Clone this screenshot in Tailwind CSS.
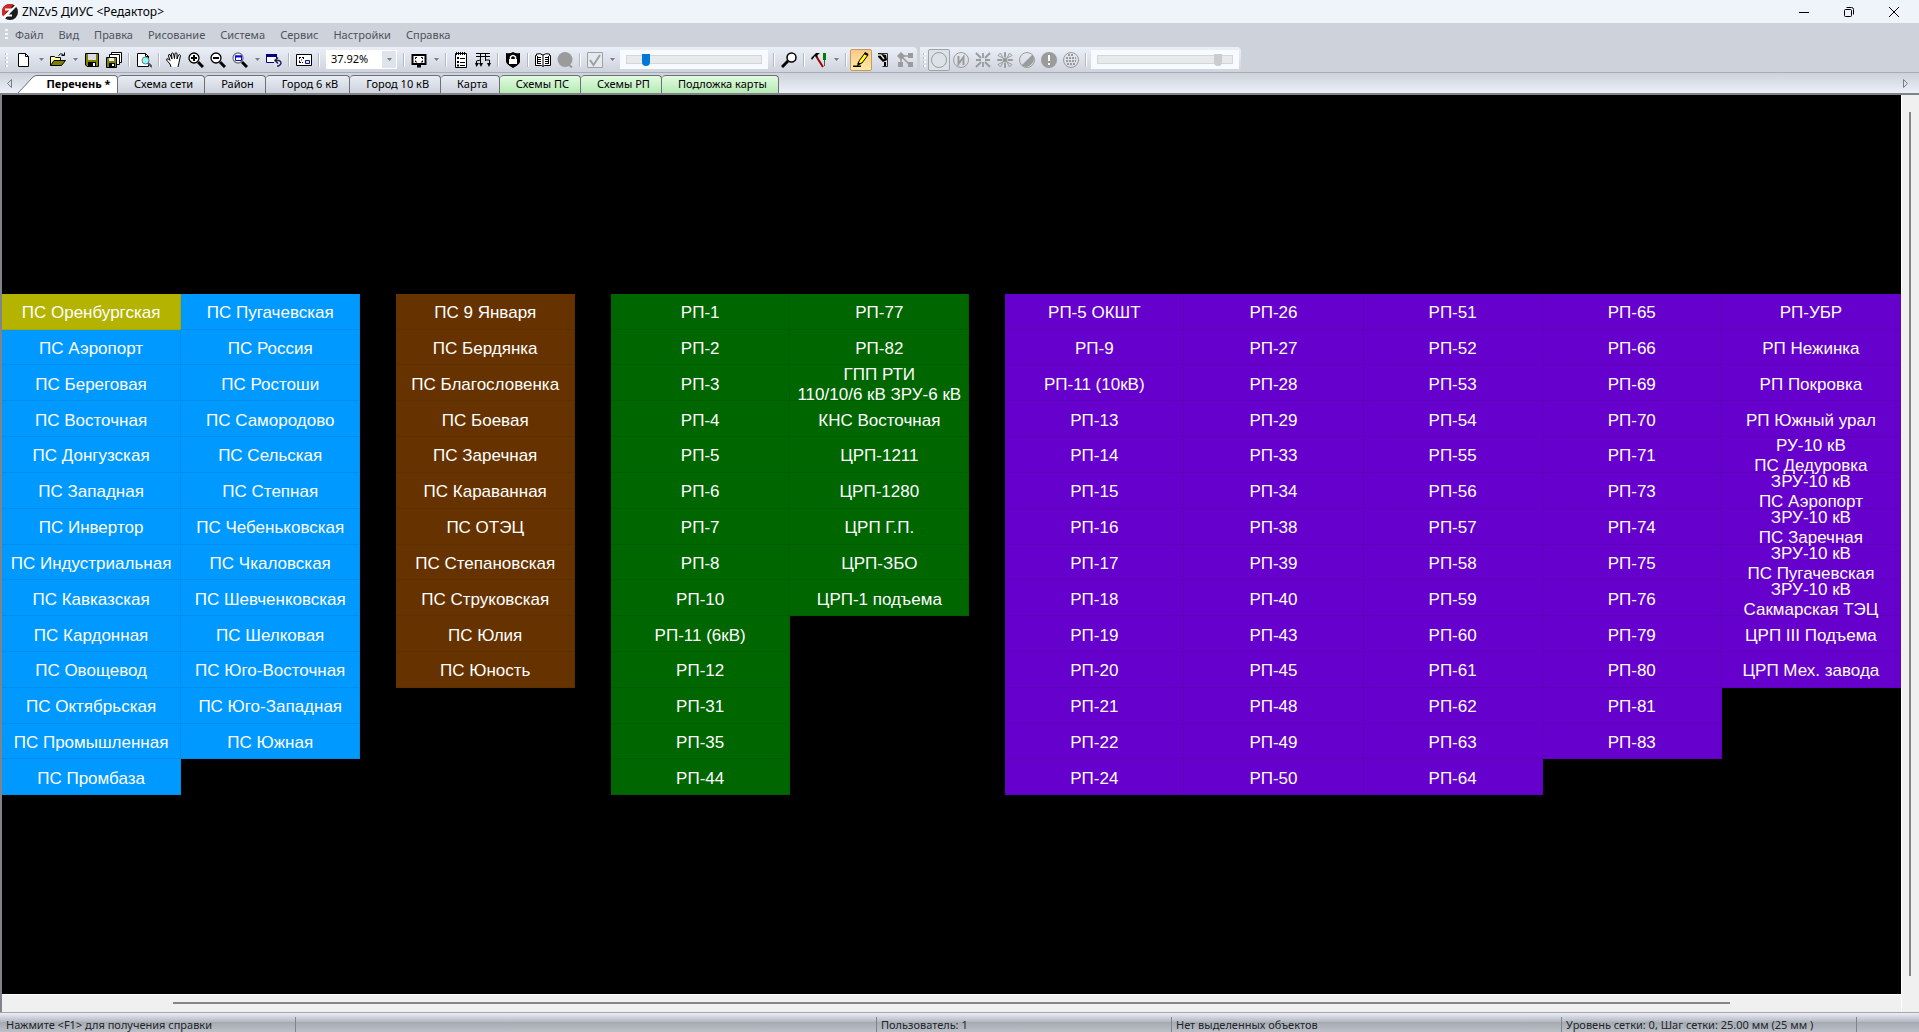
<!DOCTYPE html>
<html lang="ru">
  <head>
    <meta charset="UTF-8" />
    <meta name="viewport" content="width=device-width, initial-scale=1.0" />
    <script src="https://cdn.jsdelivr.net/npm/@tailwindcss/browser@4"></script>
    <title>ZNZv5 ДИУС &lt;Редактор&gt;</title>
  </head>
  <body class="flex h-screen flex-col overflow-hidden bg-[#ced2db] font-['Noto_Sans',sans-serif] text-[11px] text-black">
    <!-- Title bar -->
    <header class="flex h-[23px] shrink-0 items-center bg-[#eff4fb] pr-0.5">
      <svg class="ml-0.5 size-4" viewBox="0 0 16 16">
        <circle cx="8" cy="8" r="8" fill="#1b1b1b" />
        <path d="M2.300 13.700A8 8 0 0 1 11 .6L9 4 3 10z" fill="#d8231f" />
        <path d="M3 5.500h6.500L4 11.500h6" fill="none" stroke="#fff" stroke-width="2" />
        <path d="M0 13.500 14.500 0l1 1.500L2.500 15z" fill="#fff" />
      </svg>
      <h1 class="ml-1 text-[12px]">ZNZv5 ДИУС &lt;Редактор&gt;</h1>
      <div class="ml-auto flex">
        <button class="flex h-5 w-[45px] items-center justify-center" aria-label="Свернуть">
          <svg class="size-3" viewBox="0 0 12 12"><path d="M1 6.500h10" stroke="#000" /></svg>
        </button>
        <button class="flex h-5 w-[45px] items-center justify-center" aria-label="Восстановить">
          <svg class="size-3" viewBox="0 0 12 12" fill="none" stroke="#000">
            <rect x="1.500" y="3.500" width="7" height="7" rx="1" />
            <path d="M3.500 1.500h5q2 0 2 2v5" />
          </svg>
        </button>
        <button class="flex h-5 w-[46px] items-center justify-center" aria-label="Закрыть">
          <svg class="size-3" viewBox="0 0 12 12"><path d="M1 1l10 10M11 1 1 11" stroke="#000" /></svg>
        </button>
      </div>
    </header>

    <!-- Menu -->
    <nav class="flex h-6 shrink-0 items-center gap-[15px] pl-[5px] text-[#4e535e]">
      <svg class="-mr-2 h-3 w-[3px]" viewBox="0 0 3 12"><path d="M1.500 0v12" stroke="#f3f5f9" stroke-width="3" stroke-dasharray="2 2" /></svg>
      <a href="#">Файл</a>
      <a href="#">Вид</a>
      <a href="#">Правка</a>
      <a href="#">Рисование</a>
      <a href="#">Система</a>
      <a href="#">Сервис</a>
      <a href="#">Настройки</a>
      <a href="#">Справка</a>
    </nav>

    <!-- Toolbars -->
    <div class="flex h-[26px] shrink-0 gap-[3px] border-b border-[#a8adb6]">
      <div id="toolbar-main" class="flex w-[917px] items-center rounded-r-sm bg-linear-to-b from-[#ebeff8] to-[#cfd3dd] pl-[5px]"></div>
      <div id="toolbar-extra" class="flex w-[321px] items-center rounded-r-sm bg-linear-to-b from-[#ebeff8] to-[#cfd3dd] pl-[3px]"></div>
    </div>

    <!-- Tabs -->
    <div class="flex h-5 shrink-0 items-end bg-linear-to-b from-[#ced2db] to-[#ebeff8]">
      <button class="flex h-full w-[18px] items-center justify-center" aria-label="Назад">
        <svg class="h-[9px] w-[5px]" viewBox="0 0 5 9"><path d="M4.500.5v8L.5 4.500z" fill="none" stroke="#777b84" /></svg>
      </button>
      <button class="flex h-[18px] items-center font-bold">
        <svg class="h-[18px] w-[18px]" viewBox="0 0 18 18"><path d="M0 18 15 2l3-1.500V18z" fill="#fff" /><path d="M0 18 15 2l3-1.500" fill="none" stroke="#6d7078" /></svg>
        <span class="flex h-full w-[82px] items-center justify-center rounded-tr-sm border-t border-r border-[#6d7078] bg-white pl-1">Перечень *</span>
      </button>
      <div id="tabs" class="flex"></div>
      <button class="ml-auto flex h-full w-[27px] items-center justify-center" aria-label="Вперёд">
        <svg class="h-[9px] w-[5px]" viewBox="0 0 5 9"><path d="M.5.5v8l4-4z" fill="none" stroke="#777b84" /></svg>
      </button>
    </div>

    <!-- Scheme with scrollbars -->
    <main class="flex min-h-0 grow border-t-2 border-l-2 border-[#808388] bg-[#f0f0f0]">
      <div class="flex min-w-0 grow flex-col">
        <div id="scheme" class="grid min-h-0 grow grid-cols-[5fr_5fr_1fr_5fr_1fr_5fr_5fr_1fr_5fr_5fr_5fr_5fr_5fr] content-center bg-black font-['Liberation_Sans',Arial,sans-serif] text-[17px] leading-5 text-white"></div>
        <div class="flex h-[18px] shrink-0 items-center border-t border-white pb-px">
          <div class="mx-[9%] h-0.5 grow bg-[#858585]"></div>
        </div>
      </div>
      <div class="flex w-[18px] shrink-0 justify-center border-l border-white pt-[17px] pr-px pb-9">
        <div class="w-0.5 bg-[#858585]"></div>
      </div>
    </main>

    <!-- Status bar -->
    <footer class="grid h-5 shrink-0 grid-cols-[296fr_581fr_295fr_390fr_295fr_62fr] border-t border-[#a3a6ad] bg-[linear-gradient(#eceef2,#b3b9c6_45%,#a6abb2_50%,#bcc0c8)] pt-1 leading-4 text-[#22252c]">
      <div class="border-r border-[#80848c] pl-1.5">Нажмите &lt;F1&gt; для получения справки</div>
      <div class="border-r border-[#80848c]"></div>
      <div class="border-r border-[#80848c] pl-1">Пользователь: 1</div>
      <div class="border-r border-[#80848c] pl-1">Нет выделенных объектов</div>
      <div class="border-r border-[#80848c] pl-1">Уровень сетки: 0, Шаг сетки: 25.00 мм (25 мм )</div>
      <div></div>
    </footer>

    <script>
      // 16x16 toolbar icons
      const icons = {
        'Создать': '<path d="M2.500 1.500h7l3 3v10h-10z" fill="#fff" stroke="#000"/><path d="M9.500 1.500v3h3" fill="none" stroke="#000"/>',
        'Открыть': '<path d="M.5 13.500v-9h4l1 1h5v3" fill="#ffff9c" stroke="#000"/><path d="M.5 13.500 4 8.500h11.500l-4 5z" fill="#808000" stroke="#000"/><path d="M8.500 3.500q2-3 5-1M14.500.5v3h-3" fill="none" stroke="#000"/>',
        'Сохранить': '<path d="M1.500 1.500h13v13H3l-1.500-1.500z" fill="#808000" stroke="#000"/><path d="M4 2h8v6H4z" fill="#d9dce2"/><path d="M4 10h8v5H4z" fill="#000"/><path d="M9 11h2v3H9z" fill="#fff"/>',
        'Сохранить все': '<path d="M5.500.5h10v10h-10z" fill="#fff" stroke="#000"/><path d="M3.500 2.500h10v10h-10z" fill="#fff" stroke="#000"/><path d="M.5 5.500h10v10H.5z" fill="#808000" stroke="#000"/><path d="M3 6h5v3H3z" fill="#eee"/><path d="M3 11h6v5H3z"/><path d="M6 12h2v2H6z" fill="#fff"/>',
        'Просмотр': '<path d="M1.500 1.500h8l3 3v10h-11z" fill="#fff" stroke="#000"/><path d="M9.500 1.500v3h3" fill="none" stroke="#000"/><circle cx="9.500" cy="8.500" r="3.500" fill="#8ff" stroke="#777"/><path d="m12 11 4 4" stroke="#456" stroke-width="2"/>',
        'Рука': '<path d="m5 15-1-3-3.500-4q0-2 2-1L4 8.500 2.500 4q0-2 1.500-1.500L6 7 5.500 2q.5-2 2-.5L8.500 6.500l.5-5q1-1.500 2 0v5.500l1.500-4q1.500-1 2 .5L13 10.500l-1 4.500" fill="#fff" stroke="#000"/>',
        'Увеличить': '<circle cx="6" cy="6" r="5" fill="#fff" stroke="#000" stroke-width="1.300"/><path d="M3 6h6M6 3v6" stroke="#000" stroke-width="2"/><path d="m10 10 5 5" stroke="#000" stroke-width="3"/>',
        'Уменьшить': '<circle cx="6" cy="6" r="5" fill="#fff" stroke="#000" stroke-width="1.300"/><path d="M3 6h6" stroke="#000" stroke-width="2"/><path d="m10 10 5 5" stroke="#000" stroke-width="3"/>',
        'Масштаб окна': '<circle cx="6" cy="6" r="5" fill="#fff" stroke="#777" stroke-width="1.300"/><path d="M3.500 4h6v4.500h-6z" fill="#fff" stroke="#11a"/><path d="M3 3.500h7v2H3z" fill="#00f"/><path d="m10 10 5 5" stroke="#000" stroke-width="3"/>',
        'Предыдущий вид': '<path d="M.5 2.500h10v8H.5z" fill="#fff" stroke="#000080"/><path d="M0 2h11v3H0z" fill="#000080"/><path d="M8 6h8v9H8z" fill="#dfe3ec"/><path d="M9 8.500h4q2 .5 2 2.500t-2.500 3H11M12 5.500l-3 3 3 3" fill="none" stroke="#225" stroke-width="1.500"/>',
        'Навигатор': '<path d="M.5 2.500h15v11H.5z" fill="#fff" stroke="#000"/><path d="M3 5.500h2M6 5.500h2M3 10.500h2M6 10.500h1M3.500 6v1M3.500 8.500v2M7.500 6v1M5 8h1" stroke="#000"/><path d="M9.500 8.500h4v3h-4z" fill="#ff0" stroke="#00f"/>',
        'Экран': '<path d="M1.500 3h13v9h-13z" fill="#fff" stroke="#000" stroke-width="2"/><path d="M4.500 7V5.500H6M10 5.500h1.500V7M11.500 8.500V10H10M6 10H4.500V8.500" fill="none" stroke="#000"/><path d="M6 14h4" stroke="#000" stroke-width="3"/>',
        'Список': '<path d="M2.500 1.500h11v14h-11z" fill="#fff" stroke="#000"/><path d="M3 1.500h10" stroke="#000" stroke-width="3" stroke-dasharray="1 1"/><path d="M4 5h2v2H4zM4 9h2v2H4zM4 12.500h2v2H4z"/><path d="M7 6.500h5M7 10.500h5M7 13.500h5" stroke="#000"/>',
        'Дерево': '<path d="M1 1.500h14M1 4.500h14M5.500 1v8M10.500 1v8M5.500 8l-4 1v5M10.500 8h4v5M5.500 8v5" fill="none" stroke="#000"/><path d="m0 11 1.500 4L4 11zM4 11l2 4 2-4zM12 11l2 4 2-4z"/>',
        'Защита': '<path d="M1 1q4 1 7-1 3 2 7 1v9q-1 3-7 6-6-3-7-6z"/><path d="M4 7h8v5H4z" fill="#fff"/><path d="M5.500 7V5q2.500-3 5 0v2" fill="none" stroke="#fff" stroke-width="1.500"/>',
        'Справочник': '<path d="M.5 3.500h1V2q4-1 6.500 1 2.500-2 6.500-1v1.500h1v10h-6l-1.500 1-1.500-1h-6z" fill="#fff" stroke="#000"/><path d="M8 3v11M2.500 4v8M13.500 4v8M3 5.500h3M3 7.500h3M3 9.500h3M3 11.500h3M10 5.500h3M10 7.500h3M10 9.500h3M10 11.500h3" stroke="#000"/>',
        'Поиск объекта': '<circle cx="8" cy="7.500" r="7.500" fill="#9b9b9b"/><path d="m11 12 4 3.500" stroke="#9b9b9b" stroke-width="2"/>',
        'Проверка': '<path d="M.5.500h15v15H.5z" fill="#e6e9ef" stroke="#a0a0a0"/><path d="m3 8 3.500 5L13 3" fill="none" stroke="#a0a0a0" stroke-width="2"/>',
        'Найти': '<circle cx="10.500" cy="5.500" r="4.500" fill="#fff" stroke="#000" stroke-width="1.500"/><path d="m7 9-6 6" stroke="#000" stroke-width="3"/>',
        'Инструменты': '<path d="m5 4 7 11" stroke="#a00000" stroke-width="2"/><path d="M0 6 5 1h4L6.500 3v3L4 4 1 8z"/><path d="M12 1h3v7h-3z" fill="#008000"/><path d="M13.500 8v6" stroke="#555"/>',
        'Редактор': '<path d="m5 12 1-3 6-8 3 2-6 8z" fill="#ff0" stroke="#000"/><path d="m4 14 1-4 3 2zM0 13.500h8V15H0zM12 0l3.500 2-1 2-3.500-2z"/>',
        'Фонарик': '<path d="M3.500 1.500h9v13h-5" fill="#e0e0e0" stroke="#333"/><path d="m3 1 8 2 1 5-4 2-5-5z"/><path d="m3 3 3 0 3 4" fill="none" stroke="#ddd" stroke-width="1.500"/><path d="M9 10h2v4H9z"/>',
        'Связи': '<path d="M4 4h9M4 5v8M5 5l9 9" stroke="#9b9b9b" fill="none" stroke-width="1.500"/><path d="m4 0 4 4-4 4-4-4zM11 1h5v5h-5zM1 10h5v5H1zM11 10h5v5h-5z" fill="#9b9b9b"/>',
        'Круг': '<circle cx="8" cy="8" r="7.500" fill="none" stroke="#9b9b9b"/>',
        'Нормальная схема': '<circle cx="8" cy="8" r="7.500" fill="none" stroke="#9b9b9b"/><path d="M5.500 4v8l5-7v8" fill="none" stroke="#9b9b9b" stroke-width="2"/>',
        'Сжать': '<path d="m1 1 5 5M15 1l-5 5M1 15l5-5M15 15l-5-5M8 1v5M8 10v5M1 8h5M10 8h5" stroke="#9b9b9b" stroke-width="1.800"/>',
        'Цветок': '<circle cx="8" cy="8" r="2.500" fill="#9b9b9b"/><path d="M6 6 1 3.500 3.500 1zM10 6l2.500-5L15 3.500zM6 10l-2.500 5L1 12.500zM10 10l5 2.500-2.500 2.500zM7.500 5V.5h1V5M7.500 11v4.500h1V11M5 7.500H.5v1H5M11 7.500h4.500v1H11" fill="none" stroke="#9b9b9b"/>',
        'Контраст': '<circle cx="8" cy="8" r="7.500" fill="none" stroke="#9b9b9b"/><path d="M13.500 2.500a8 8 0 0 1-11 11z" fill="#9b9b9b"/>',
        'Внимание': '<circle cx="8" cy="8" r="8" fill="#9b9b9b"/><path d="M7 3h2v6H7zM7 11h2v2H7z" fill="#fff"/>',
        'Сеть': '<circle cx="8" cy="8" r="7.500" fill="none" stroke="#9b9b9b"/><path d="M3 6h10M3 9h10M4 12h8M5 3h6" stroke="#9b9b9b" stroke-width="2" stroke-dasharray="2 1"/>',
      }

      const grip = (cls) => `<svg class="${cls} h-[14px] w-[3px]" viewBox="0 0 3 14"><path d="M1.500 0v14" stroke="#fff" stroke-width="3" stroke-dasharray="2 2"/><path d="M.5 0v14" stroke="#b4b9c4" stroke-dasharray="2 2"/></svg>`
      const sep = '<span class="flex w-2 justify-center"><i class="h-[14px] w-0.5 border-r border-white bg-[#b3b7c1]"></i></span>'
      const caret = '<button class="flex h-[22px] w-3 items-center justify-center" aria-label="Ещё"><svg class="h-[3px] w-[5px]" viewBox="0 0 5 3"><path d="M0 0h5L2.500 3z" fill="#777b82"/></svg></button>'
      const button = (name) => {
        let state = 'border-transparent'
        if (name === 'Редактор') state = 'border-[#c79a5b] bg-linear-to-b from-[#fbc98a] to-[#ffe9a6]'
        if (name === 'Круг') state = 'border-[#9ba5ad] bg-[#dce2e6]'
        return `<button class="flex h-[22px] w-[22px] shrink-0 items-center justify-center rounded-xs border ${state}" aria-label="${name}"><svg class="size-4 shrink-0" viewBox="0 0 16 16">${icons[name]}</svg></button>`
      }
      const slider = (label, value, cls, thumb) => `
        <label class="flex h-[19px] w-[148px] shrink-0 items-center bg-[#f7faff] px-1.5 ${cls}">
          <input type="range" class="h-[9px] w-full appearance-none border border-[#d6d6d6] bg-[#e7eaea] ${thumb} [&::-webkit-slider-thumb]:h-3 [&::-webkit-slider-thumb]:w-2 [&::-webkit-slider-thumb]:appearance-none [&::-webkit-slider-thumb]:rounded-b-sm" value="${value}" aria-label="${label}" />
        </label>`
      const zoom = `
        <select class="mx-[3px] h-[19px] w-[71px] shrink-0 appearance-none bg-white bg-[linear-gradient(#dfe3eb,#dfe3eb)] bg-[length:14px_17px] bg-[position:right_1px_center] bg-no-repeat pl-[5px]" aria-label="Масштаб"><option>37.92%</option></select>
        <svg class="pointer-events-none -ml-[13px] mr-2 h-[3px] w-[5px] shrink-0" viewBox="0 0 5 3"><path d="M0 0h5L2.500 3z" fill="#777b82"/></svg>`

      const render = (items) =>
        items.map((item) => (item === '|' ? sep : item === 'v' ? caret : icons[item] ? button(item) : item)).join('')

      document.querySelector('#toolbar-main').innerHTML = render([
        grip('mr-[5px]'), 'Создать', 'v', 'Открыть', 'v', 'Сохранить', 'Сохранить все', '|',
        'Просмотр', '|', 'Рука', 'Увеличить', 'Уменьшить', 'Масштаб окна', 'v', 'Предыдущий вид', '|',
        'Навигатор', '|', zoom, '|', 'Экран', 'v', '|', 'Список', 'Дерево', '|', 'Защита', '|',
        'Справочник', 'Поиск объекта', '|', 'Проверка', 'v',
        slider('Яркость', 12, 'mx-0.5', '[&::-webkit-slider-thumb]:bg-[#0078d7]'),
        '|', 'Найти', '|', 'Инструменты', 'v', '|', 'Редактор', 'Фонарик', 'Связи',
      ])
      document.querySelector('#toolbar-extra').innerHTML = render([
        grip('mr-0.5'), 'Круг', 'Нормальная схема', 'Сжать', 'Цветок', 'Контраст', 'Внимание', 'Сеть', '|',
        slider('Прозрачность', 92, 'ml-px', '[&::-webkit-slider-thumb]:bg-[#cccccc]'),
      ])

      // Tabs
      const gray = 'from-[#e9edf5] to-[#cdd2dc]'
      const green = 'from-[#e2fbe0] to-[#b5eab4]'
      document.querySelector('#tabs').innerHTML = [
        ['Схема сети', gray], ['Район', gray], ['Город 6 кВ', gray], ['Город 10 кВ', gray], ['Карта', gray],
        ['Схемы ПС', green], ['Схемы РП', green], ['Подложка карты', green],
      ]
        .map(([name, color]) => `<button class="flex h-[18px] items-center rounded-t-sm border-t border-r border-[#6d7078] bg-linear-to-b pr-[11px] pl-4 ${color}">${name}</button>`)
        .join('')

      // Scheme columns, an empty one is a gap between the groups
      const blue = 'bg-[#0099ff]'
      const brown = 'bg-[#663300]'
      const darkGreen = 'bg-[#006600]'
      const violet = 'bg-[#6600cc]'
      const columns = [
        [blue, 'ПС Оренбургская', 'ПС Аэропорт', 'ПС Береговая', 'ПС Восточная', 'ПС Донгузская', 'ПС Западная', 'ПС Инвертор', 'ПС Индустриальная', 'ПС Кавказская', 'ПС Кардонная', 'ПС Овощевод', 'ПС Октябрьская', 'ПС Промышленная', 'ПС Промбаза'],
        [blue, 'ПС Пугачевская', 'ПС Россия', 'ПС Ростоши', 'ПС Самородово', 'ПС Сельская', 'ПС Степная', 'ПС Чебеньковская', 'ПС Чкаловская', 'ПС Шевченковская', 'ПС Шелковая', 'ПС Юго-Восточная', 'ПС Юго-Западная', 'ПС Южная'],
        [],
        [brown, 'ПС 9 Января', 'ПС Бердянка', 'ПС Благословенка', 'ПС Боевая', 'ПС Заречная', 'ПС Караванная', 'ПС ОТЭЦ', 'ПС Степановская', 'ПС Струковская', 'ПС Юлия', 'ПС Юность'],
        [],
        [darkGreen, 'РП-1', 'РП-2', 'РП-3', 'РП-4', 'РП-5', 'РП-6', 'РП-7', 'РП-8', 'РП-10', 'РП-11 (6кВ)', 'РП-12', 'РП-31', 'РП-35', 'РП-44'],
        [darkGreen, 'РП-77', 'РП-82', 'ГПП РТИ<br />110/10/6 кВ ЗРУ-6 кВ', 'КНС Восточная', 'ЦРП-1211', 'ЦРП-1280', 'ЦРП Г.П.', 'ЦРП-ЗБО', 'ЦРП-1 подъема'],
        [],
        [violet, 'РП-5 ОКШТ', 'РП-9', 'РП-11 (10кВ)', 'РП-13', 'РП-14', 'РП-15', 'РП-16', 'РП-17', 'РП-18', 'РП-19', 'РП-20', 'РП-21', 'РП-22', 'РП-24'],
        [violet, 'РП-26', 'РП-27', 'РП-28', 'РП-29', 'РП-33', 'РП-34', 'РП-38', 'РП-39', 'РП-40', 'РП-43', 'РП-45', 'РП-48', 'РП-49', 'РП-50'],
        [violet, 'РП-51', 'РП-52', 'РП-53', 'РП-54', 'РП-55', 'РП-56', 'РП-57', 'РП-58', 'РП-59', 'РП-60', 'РП-61', 'РП-62', 'РП-63', 'РП-64'],
        [violet, 'РП-65', 'РП-66', 'РП-69', 'РП-70', 'РП-71', 'РП-73', 'РП-74', 'РП-75', 'РП-76', 'РП-79', 'РП-80', 'РП-81', 'РП-83'],
        [violet, 'РП-УБР', 'РП Нежинка', 'РП Покровка', 'РП Южный урал', 'РУ-10 кВ<br />ПС Дедуровка', 'ЗРУ-10 кВ<br />ПС Аэропорт', 'ЗРУ-10 кВ<br />ПС Заречная', 'ЗРУ-10 кВ<br />ПС Пугачевская', 'ЗРУ-10 кВ<br />Сакмарская ТЭЦ', 'ЦРП III Подъема', 'ЦРП Мех. завода'],
      ]
      document.querySelector('#scheme').innerHTML = columns
        .map(([color, ...names]) => {
          const cells = names.map((name) => {
            const bg = name === 'ПС Оренбургская' ? 'bg-[#b3b300]' : color
            return `<a href="#" class="flex aspect-[5/1] min-h-0 items-center justify-center border-r border-b border-black/8 pt-1 text-center whitespace-nowrap ${bg}"><span>${name}</span></a>`
          })
          return `<div>${cells.join('')}</div>`
        })
        .join('')
    </script>
  </body>
</html>
